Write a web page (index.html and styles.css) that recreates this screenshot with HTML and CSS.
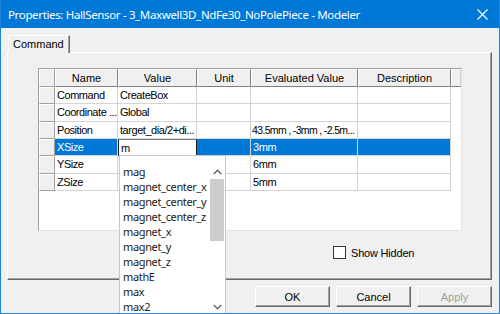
FILE: index.html
```html
<!DOCTYPE html>
<html>
<head>
<meta charset="utf-8">
<link rel="stylesheet" href="styles.css">
</head>
<body>
<div class="window">
  <div class="titlebar">
    <span class="title">Properties: HallSensor - 3_Maxwell3D_NdFe30_NoPolePiece - Modeler</span>
    <svg class="close" width="11" height="11" viewBox="0 0 11 11"><path d="M0.5 0.5 L10.5 10.5 M10.5 0.5 L0.5 10.5" stroke="#fff" stroke-width="1.1" fill="none"/></svg>
  </div>
  <div class="client">
    <div class="tabs"><div class="tab">Command</div></div>
    <div class="panel">
      <div class="grid">
        <div class="row head">
          <div class="rh"></div>
          <div class="hc">Name</div>
          <div class="hc">Value</div>
          <div class="hc">Unit</div>
          <div class="hc">Evaluated Value</div>
          <div class="hc">Description</div>
          <div class="hc last"></div>
        </div>
        <div class="row">
          <div class="rh"></div>
          <div class="c">Command</div>
          <div class="c">CreateBox</div>
          <div class="c"></div>
          <div class="c"></div>
          <div class="c"></div>
        </div>
        <div class="row">
          <div class="rh"></div>
          <div class="c">Coordinate ...</div>
          <div class="c">Global</div>
          <div class="c"></div>
          <div class="c"></div>
          <div class="c"></div>
        </div>
        <div class="row">
          <div class="rh"></div>
          <div class="c">Position</div>
          <div class="c">target_dia/2+di...</div>
          <div class="c"></div>
          <div class="c tight">43.5mm , -3mm , -2.5m...</div>
          <div class="c"></div>
        </div>
        <div class="row sel">
          <div class="rh"></div>
          <div class="c">XSize</div>
          <div class="c edit">m</div>
          <div class="c"></div>
          <div class="c">3mm</div>
          <div class="c"></div>
        </div>
        <div class="row">
          <div class="rh"></div>
          <div class="c">YSize</div>
          <div class="c"></div>
          <div class="c"></div>
          <div class="c">6mm</div>
          <div class="c"></div>
        </div>
        <div class="row">
          <div class="rh"></div>
          <div class="c">ZSize</div>
          <div class="c"></div>
          <div class="c"></div>
          <div class="c">5mm</div>
          <div class="c"></div>
        </div>
      </div>
      <label class="showhidden"><span class="cb"></span><span>Show Hidden</span></label>
    </div>
    <div class="buttons">
      <div class="btn">OK</div>
      <div class="btn">Cancel</div>
      <div class="btn disabled">Apply</div>
    </div>
  </div>
  <div class="dropdown">
    <div class="items">
      <div class="item">mag</div>
      <div class="item">magnet_center_x</div>
      <div class="item">magnet_center_y</div>
      <div class="item">magnet_center_z</div>
      <div class="item">magnet_x</div>
      <div class="item">magnet_y</div>
      <div class="item">magnet_z</div>
      <div class="item">mathE</div>
      <div class="item">max</div>
      <div class="item">max2</div>
    </div>
    <div class="scroll">
      <div class="arrow">
        <svg width="9" height="6" viewBox="0 0 9 6"><path d="M0.8 5 L4.5 1.2 L8.2 5" stroke="#606060" stroke-width="1.3" fill="none"/></svg>
      </div>
      <div class="thumb"></div>
      <div class="track"></div>
      <div class="arrow">
        <svg width="9" height="6" viewBox="0 0 9 6"><path d="M0.8 1 L4.5 4.8 L8.2 1" stroke="#606060" stroke-width="1.3" fill="none"/></svg>
      </div>
    </div>
  </div>
</div>
</body>
</html>
```
FILE: styles.css
```css
body {
  margin: 0;
  font-family: "Liberation Sans", Arial, sans-serif;
}
.window {
  position: relative;
  width: 500px;
  height: 314px;
  box-sizing: border-box;
  background: #f0f0f0;
  border: 1px solid #1f84d8;
  border-top: 0;
  display: flex;
  flex-direction: column;
  overflow: hidden;
}
.titlebar {
  height: 28px;
  flex: none;
  background: #0078d7;
  margin: 0 -1px;
  display: flex;
  align-items: center;
  justify-content: space-between;
  padding: 0 12px 0 8px;
  color: #fff;
  font-family: "Noto Sans", sans-serif;
  font-size: 11.5px;
  letter-spacing: -0.35px;
}
.client {
  flex: 1;
  display: flex;
  flex-direction: column;
  padding: 7px 7px 0 6px;
}
.tabs {
  display: flex;
  padding-left: 1px;
}
.tab {
  position: relative;
  z-index: 1;
  height: 18px;
  box-sizing: border-box;
  padding: 2px 5px 0 4px;
  border: 1px solid #fff;
  border-right-color: #696969;
  border-bottom: 0;
  margin-bottom: -1px;
  background: #f0f0f0;
  font-size: 11px;
  box-shadow: inset -1px 0 #a0a0a0;
}
.panel {
  height: 228px;
  box-sizing: border-box;
  border: 1px solid #fff;
  border-right-color: #696969;
  border-bottom-color: #696969;
  box-shadow: inset -1px -1px #a0a0a0;
  padding: 15px 0 0 30px;
  display: flex;
  flex-direction: column;
}
.grid {
  width: 424px;
  height: 163px;
  box-sizing: border-box;
  background: #fff;
  border: 1px solid #e3e3e3;
  border-top-color: #a0a0a0;
  border-left-color: #a0a0a0;
  font-size: 11px;
}
.row {
  display: grid;
  grid-template-columns: 16px 63px 79px 54px 107px 93px 10px;
  height: 17.33px;
}
.row.head {
  height: 18px;
}
.row > div {
  box-sizing: border-box;
  white-space: nowrap;
  overflow: hidden;
  display: flex;
  align-items: center;
}
.rh {
  background: #f0f0f0;
  border-top: 1px solid #fff;
  border-left: 1px solid #fff;
  border-right: 1px solid #a0a0a0;
  border-bottom: 1px solid #a0a0a0;
}
.hc {
  background: #f0f0f0;
  justify-content: center;
  border-top: 1px solid #fff;
  border-left: 1px solid #fff;
  border-right: 1px solid #808080;
  border-bottom: 1px solid #808080;
  color: #000;
}
.hc.last {
  border-right-color: #d0d0d0;
}
.c {
  padding-left: 2px;
  border-right: 1px solid #d4d4d4;
  border-bottom: 1px solid #d4d4d4;
  color: #000;
  font-size: 11px;
  letter-spacing: -0.45px;
}
.c.tight {
  font-size: 10.5px;
  letter-spacing: -0.65px;
  padding-left: 1px;
}
.row.sel .c {
  background: #0078d7;
  color: #fff;
}
.row.sel .c.edit {
  background: #fff;
  color: #000;
  border: 1px solid #1a1a1a;
  border-top-color: #7a7a7a;
  padding-left: 2px;
}
.showhidden {
  display: flex;
  align-items: center;
  gap: 5px;
  margin: 15px 0 0 295px;
  font-size: 11px;
  letter-spacing: -0.2px;
}
.cb {
  width: 11px;
  height: 11px;
  background: #fff;
  border: 1px solid #333;
}
.buttons {
  display: flex;
  justify-content: flex-end;
  gap: 6px;
  margin-top: 6px;
}
.btn {
  width: 75px;
  height: 21px;
  box-sizing: border-box;
  display: flex;
  align-items: center;
  justify-content: center;
  font-size: 11px;
  background: #f0f0f0;
  border: 1px solid;
  border-color: #fff #696969 #696969 #fff;
  box-shadow: inset -1px -1px #a0a0a0;
}
.btn.disabled {
  color: #a0a0a0;
}
.dropdown {
  position: absolute;
  left: 118px;
  top: 155px;
  width: 107px;
  height: 160px;
  box-sizing: border-box;
  background: #fff;
  border: 1px solid #c8c8c8;
  display: flex;
  padding-top: 8px;
  font-family: "Noto Sans", sans-serif;
  font-size: 11px;
  letter-spacing: -0.35px;
  color: #1a1a1a;
}
.items {
  flex: 1;
  padding-left: 3px;
}
.item {
  height: 15px;
  line-height: 15px;
  white-space: nowrap;
}
.scroll {
  width: 14px;
  display: flex;
  flex-direction: column;
  margin-right: 1px;
}
.arrow {
  height: 15px;
  display: flex;
  align-items: center;
  justify-content: center;
}
.thumb {
  height: 62px;
  background: #cdcdcd;
}
.track {
  flex: 1;
}
```
